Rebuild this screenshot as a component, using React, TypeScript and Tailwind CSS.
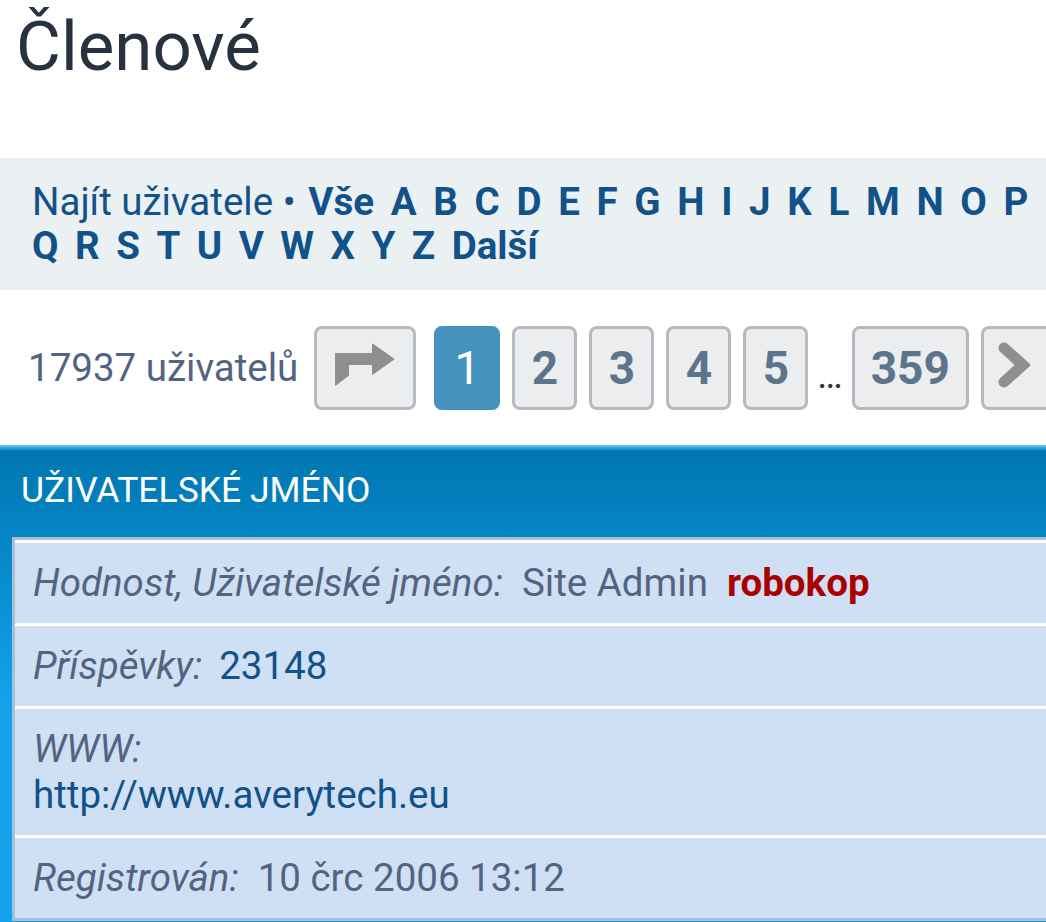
const letters1 = ["A", "B", "C", "D", "E", "F", "G", "H", "I", "J", "K", "L", "M", "N", "O", "P"];
const letters2 = ["Q", "R", "S", "T", "U", "V", "W", "X", "Y", "Z"];

const pageBtn =
  "shrink-0 h-[84px] px-[16px] flex items-center justify-center rounded-[8px] border-[3px] border-[#b4bac0] bg-[#ecedee] text-[46px] font-bold text-[#5c758c]";

function JumpIcon() {
  return (
    <svg width="60" height="43" viewBox="0 0 60 43" className="mb-[7px]">
      <path
        d="M0 10 L37 10 L37 1 Q37 0 38 0.8 L59 15.5 Q60 16 59 16.8 L38 31.5 Q37 32 37 31 L37 22 L14 22 L14 32.5 L1 42.5 Q0 43 0 42 Z"
        fill="#8f8f8f"
      />
    </svg>
  );
}

function ChevronIcon() {
  return (
    <svg width="32" height="46" viewBox="0 0 32 46" className="mb-[6px]">
      <polyline
        points="6,6 25,23 6,40"
        fill="none"
        stroke="#8f8f8f"
        strokeWidth="11"
        strokeLinecap="round"
        strokeLinejoin="miter"
      />
    </svg>
  );
}

function Row({ children, className = "" }: { children: React.ReactNode; className?: string }) {
  return (
    <div className={"border-t-[3px] border-white py-[17px] pl-[18px] text-[38.5px] leading-[46px] text-[#536482] " + className}>
      {children}
    </div>
  );
}

export default function App() {
  return (
    <div className="w-full h-[922px] overflow-hidden bg-white font-['Roboto',sans-serif]">
      {/* title */}
      <h2 className="pl-[16px] pt-[7px] text-[69px] leading-[80px] font-normal text-[#28313f]">Členové</h2>

      {/* letter filter */}
      <div className="mt-[71px] bg-[#ebf0f3] py-[22px] pl-[32px] text-[38.5px] leading-[44px] text-[#105289] whitespace-nowrap">
        <div className="flex gap-x-[16.7px]">
          <span className="mr-[-4px]">Najít uživatele&nbsp;•</span>
          <span className="font-bold">Vše</span>
          {letters1.map((l) => (
            <span key={l} className="font-bold">
              {l}
            </span>
          ))}
        </div>
        <div className="flex gap-x-[16.5px] font-bold">
          {letters2.map((l) => (
            <span key={l}>{l}</span>
          ))}
          <span>Další</span>
        </div>
      </div>

      {/* pagination */}
      <div className="flex items-center gap-[12px] pt-[36px] pb-[35px] pl-[28px] whitespace-nowrap">
        <span className="shrink-0 text-[38.5px] text-[#536482]">17937 uživatelů</span>
        <div className={pageBtn + " ml-[4px] w-[102px] px-0"}>
          <JumpIcon />
        </div>
        <div className="shrink-0 ml-[6px] w-[66px] h-[84px] flex items-center justify-center rounded-[8px] border-[3px] border-[#4692bf] bg-[#4692bf] text-[46px] text-white">
          1
        </div>
        <div className={pageBtn + " w-[65px] px-0"}>2</div>
        <div className={pageBtn + " w-[65px] px-0"}>3</div>
        <div className={pageBtn + " w-[65px] px-0"}>4</div>
        <div className={pageBtn + " w-[65px] px-0"}>5</div>
        <span className="shrink-0 self-end mb-[20px] mx-[-3px] text-[38px] leading-[30px] text-[#333333]">…</span>
        <div className={pageBtn + " w-[117px] px-0"}>359</div>
        <div className={pageBtn + " w-[80px] px-0 justify-start pl-[14px]"}>
          <ChevronIcon />
        </div>
      </div>

      {/* member table */}
      <div className="bg-[linear-gradient(to_bottom,#6aceff_0px,#0076b1_6px,#12a3eb_260px,#12a3eb_100%)] pl-[12px] pb-[1px]">
        <div className="h-[92px] flex items-center pl-[9px] text-[35.5px] text-white">UŽIVATELSKÉ JMÉNO</div>
        <div className="border-l-[3px] border-y-[3px] border-[#a9bfd6] bg-[#cfe0f5]">
          <Row className="flex">
            <span className="italic mr-[19px]">Hodnost, Uživatelské jméno:</span>
            <span className="mr-[19px]">Site Admin</span>
            <span className="font-bold text-[#aa0000]">robokop</span>
          </Row>
          <Row className="flex">
            <span className="italic mr-[17px]">Příspěvky:</span>
            <span className="text-[#105289]">23148</span>
          </Row>
          <Row>
            <div className="italic">WWW:</div>
            <div className="text-[#105289]">http://www.averytech.eu</div>
          </Row>
          <Row className="flex">
            <span className="italic mr-[19px]">Registrován:</span>
            <span>10 črc 2006 13:12</span>
          </Row>
        </div>
      </div>
    </div>
  );
}
